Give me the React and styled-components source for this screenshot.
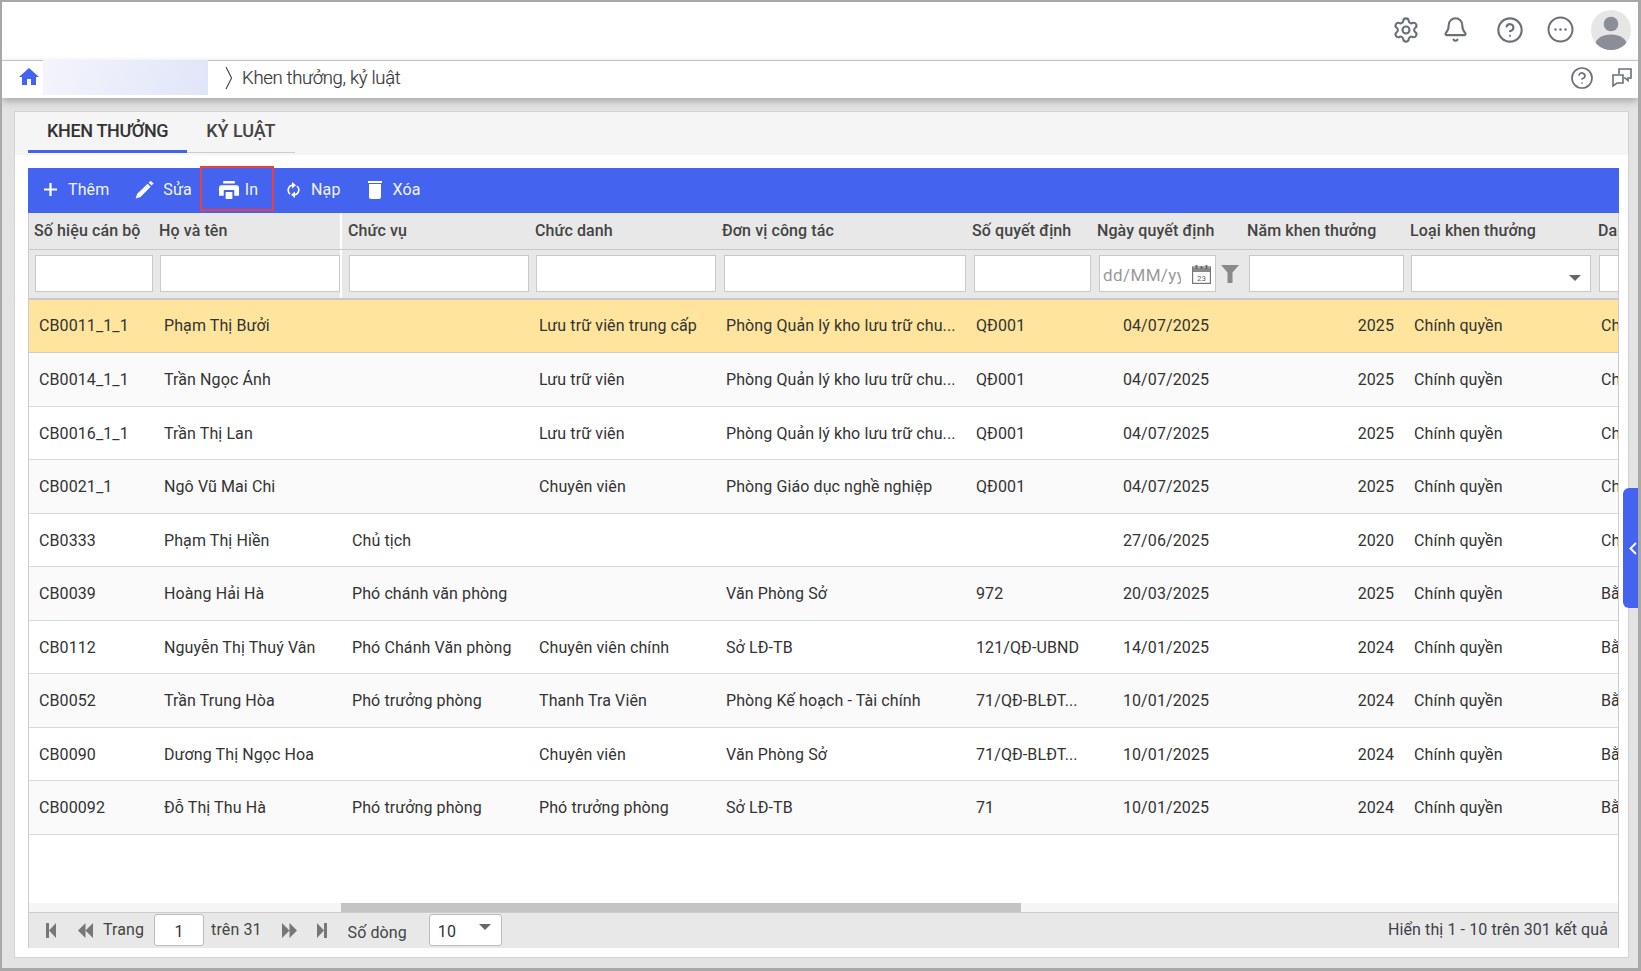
import React from "react";
import styled, { createGlobalStyle, css } from "styled-components";
import { Settings, Bell, CircleHelp } from "lucide-react";
import { MdHome } from "react-icons/md";

const Global = createGlobalStyle`
  html, body { margin: 0; padding: 0; height: 971px; overflow: hidden; }
  * { box-sizing: border-box; }
  body { font-family: Roboto, "Liberation Sans", sans-serif; color: #333; }
`;

const COLS = "124px 189px 187px 187px 250px 125px 150px 163px 188px 180px";

const Frame = styled.div`
  position: relative; width: 1641px; height: 971px; display: flex; flex-direction: column;
  background: #e3e3e3; border-style: solid; border-color: #a8a8a8; border-width: 2px 3px 3px 2px; overflow: hidden;
`;
const TopBar = styled.header`
  height: 59px; flex: none; background: #fff; border-bottom: 1px solid #ccc;
  display: flex; align-items: center; justify-content: flex-end; padding-right: 7px; padding-bottom: 3px; color: #6b6f78;
`;
const TopIcon = styled.span`
  display: flex; margin-left: ${p => p.$ml || 0}px;
`;
const Avatar = styled.span`
  width: 40px; height: 40px; border-radius: 50%; overflow: hidden; background: #e6e6e6; display: block; margin-left: ${p => p.$ml}px;
  svg { display: block; }
`;
const Crumb = styled.nav`
  position: relative; z-index: 1; height: 37px; flex: none; background: #fff; box-shadow: 0 3px 8px rgba(0,0,0,.28);
  display: flex; align-items: center; padding-left: 15px; color: #6b6f78;
`;
const HomeIcon = styled(MdHome)`
  color: #4464f0; width: 24px; height: 24px; flex: none; margin-top: -6px;
`;
const CrumbBlur = styled.div`
  width: 165px; height: 35px; margin: 0 0 4px 2px; background: linear-gradient(100deg, #f3f4fc, #e1e5f8);
`;
const CrumbSep = styled.svg`
  margin-left: 17px; flex: none; margin-bottom: 3px;
`;
const CrumbText = styled.span`
  margin-left: 9px; font-size: 18.5px; color: #3a3a3a; letter-spacing: -.3px; flex: 1; font-weight: 300;
  -webkit-text-stroke: .2px #3a3a3a; padding-bottom: 4px;
`;
const CrumbAction = styled.span`
  display: flex; margin-right: ${p => p.$mr}px; margin-bottom: 4px;
`;
const Body = styled.main`
  flex: 1; min-height: 0; padding: 13px 9px 10px 12px; display: flex;
`;
const Panel = styled.section`
  flex: 1; min-width: 0; background: #fff; border: 1px solid #d2d2d2; display: flex; flex-direction: column;
`;
const TabBar = styled.div`
  height: 43px; flex: none; background: #f5f5f5; padding-left: 13px; margin-bottom: 13px;
`;
const TabList = styled.div`
  display: inline-flex; height: 41px; border-bottom: 1px solid #ccc;
`;
const Tab = styled.div`
  height: 41px; padding: 1px 19px 2px 19px; display: flex; align-items: center;
  font-size: 18px; font-weight: 500; letter-spacing: ${p => p.$active ? -.35 : -.05}px; color: ${p => p.$active ? "#333" : "#444"};
  border-bottom: 3px solid ${p => p.$active ? "#4464f0" : "transparent"};
  margin-bottom: -1px;
`;
const Content = styled.div`
  flex: 1; min-height: 0; margin: 0 9px 9px 13px; display: flex; flex-direction: column;
`;
const Toolbar = styled.div`
  height: 45px; flex: none; background: #4464f0; display: flex; align-items: center; padding-left: 2px;
`;
const ToolButton = styled.div`
  display: flex; align-items: center; color: #f2f4fe; font-size: 16px; letter-spacing: .1px; height: 45px;
  padding: 0 ${p => p.$pr ?? 14}px 2px ${p => p.$pl ?? 14}px; gap: ${p => p.$gap ?? 11}px;
  ${p => p.$active && css`
    border: 2px solid #e8413f; padding: 2px 14px 0 17px; margin: -4px 0 0; gap: 6px;
  `}
`;
const Grid = styled.div`
  flex: 1; min-height: 0; display: flex; flex-direction: column; border-left: 1px solid #ccc; border-right: 1px solid #ccc; overflow: hidden;
`;
const HeadRow = styled.div`
  height: 37px; flex: none; display: grid; grid-template-columns: ${COLS}; background: #e8e8e8; border-bottom: 1px solid #c8c8c8; overflow: hidden;
`;
const HeadCell = styled.div`
  display: flex; align-items: center; padding-left: ${p => p.$pl ?? 6}px; padding-bottom: 1px;
  font-size: 16px; font-weight: 500; color: #444; white-space: nowrap; overflow: hidden; letter-spacing: .1px;
  ${p => p.$sep && css`border-right: 2px solid #fff;`}
`;
const FilterRow = styled.div`
  height: 49.5px; flex: none; display: grid; grid-template-columns: ${COLS}; background: #e8e8e8; border-bottom: 2px solid #c8c8c8; overflow: hidden;
`;
const FilterCell = styled.div`
  padding: 5px ${p => p.$pr ?? 0}px 0 ${p => p.$pl ?? 7}px; position: relative; display: flex; align-items: flex-start;
  ${p => p.$sep && css`border-right: 2px solid #fff;`}
`;
const FilterBox = styled.div`
  flex: ${p => p.$fixed ? "none" : 1}; width: ${p => p.$fixed ? p.$fixed + "px" : "auto"}; min-width: 0; height: 37px; background: #fff; border: 1.5px solid #c9c9c9; position: relative;
  display: flex; align-items: center;
`;
const DateInput = styled.input`
  border: 0; outline: 0; background: transparent; width: 78px; margin: 2px 0 0 3px; padding: 0; font: 17px Roboto, sans-serif; letter-spacing: .4px;
  &::placeholder { color: #999; opacity: 1; }
`;
const CalendarIcon = styled.svg`
  margin-left: 10.5px; flex: none;
`;
const FunnelIcon = styled.svg`
  flex: none; margin: 10px 0 0 5px;
`;
const SelectArrow = styled.span`
  position: absolute; right: 9px; top: 19px; width: 0; height: 0;
  border-left: 6px solid transparent; border-right: 6px solid transparent; border-top: 6px solid #666;
`;
const Rows = styled.div`
  flex: 1; min-height: 0; overflow: hidden; background: #fff;
`;
const Row = styled.div`
  height: 53.55px; display: grid; grid-template-columns: ${COLS};
  background: ${p => p.$selected ? "#fee49c" : p.$alt ? "#fafafa" : "#fff"};
  border-bottom: 1px solid ${p => p.$selected ? "#ccc" : "#d3dae9"};
`;
const Cell = styled.div`
  display: flex; align-items: center; min-width: 0; padding: 0.4px 10px 0 ${p => p.$pl ?? 10}px; font-size: 16px; color: #333; letter-spacing: .1px;
  justify-content: ${p => p.$align === "center" ? "center" : p.$align === "right" ? "flex-end" : "flex-start"};
  span { white-space: nowrap; }
  overflow: hidden;
`;
const ScrollTrack = styled.div`
  height: 9px; flex: none; background: #f5f5f5; padding-left: 312px;
`;
const ScrollThumb = styled.div`
  width: 680px; height: 100%; background: #c4c4c4;
`;
const Pager = styled.div`
  height: 36px; flex: none; background: #e8e8e8; border-top: 1px solid #ccc; display: flex; align-items: center; padding: 0 10px 1px 17px;
  font-size: 16px; color: #444; letter-spacing: .1px;
`;
const PagerIcon = styled.svg`
  flex: none; margin-left: ${p => p.$ml || 0}px;
`;
const PagerLabel = styled.span`
  margin-left: ${p => p.$ml}px; padding: ${p => p.$pt || 0}px 0 ${p => p.$pt ? 0 : 2}px; white-space: nowrap;
`;
const PagerBox = styled.div`
  margin-left: ${p => p.$ml}px; width: ${p => p.$w}px; height: 32px; flex: none; background: #fff; border: 1px solid #bbb; border-radius: 3px;
  display: flex; align-items: center; padding-top: 3px; position: relative; font-size: 16px; color: #333;
  justify-content: ${p => p.$center ? "center" : "flex-start"}; padding-left: ${p => p.$center ? 0 : 8}px;
`;
const PagerArrow = styled.span`
  position: absolute; right: 10px; top: 9px; width: 0; height: 0;
  border-left: 6px solid transparent; border-right: 6px solid transparent; border-top: 6px solid #666;
`;
const PagerSummary = styled.span`
  margin-left: auto; white-space: nowrap; color: #3f3f48; padding-bottom: 2px;
`;
const SideTab = styled.div`
  position: absolute; right: 0; top: 486px; width: 15px; height: 120px; background: #4464f0; border-radius: 6px 0 0 6px;
  display: flex; align-items: center; justify-content: center; padding-left: 5px;
`;

const HEAD = ["Số hiệu cán bộ", "Họ và tên", "Chức vụ", "Chức danh", "Đơn vị công tác", "Số quyết định", "Ngày quyết định", "Năm khen thưởng", "Loại khen thưởng", "Danh hiệu"];
const KHO = "Phòng Quản lý kho lưu trữ chu...";
const QD = "71/QĐ-BLĐT...";
const DATA = [
  ["CB0011_1_1", "Phạm Thị Bưởi", "", "Lưu trữ viên trung cấp", KHO, "QĐ001", "04/07/2025", "2025", "Chính quyền", "Chiến sĩ"],
  ["CB0014_1_1", "Trần Ngọc Ánh", "", "Lưu trữ viên", KHO, "QĐ001", "04/07/2025", "2025", "Chính quyền", "Chiến sĩ"],
  ["CB0016_1_1", "Trần Thị Lan", "", "Lưu trữ viên", KHO, "QĐ001", "04/07/2025", "2025", "Chính quyền", "Chiến sĩ"],
  ["CB0021_1", "Ngô Vũ Mai Chi", "", "Chuyên viên", "Phòng Giáo dục nghề nghiệp", "QĐ001", "04/07/2025", "2025", "Chính quyền", "Chiến sĩ"],
  ["CB0333", "Phạm Thị Hiền", "Chủ tịch", "", "", "", "27/06/2025", "2020", "Chính quyền", "Chiến sĩ"],
  ["CB0039", "Hoàng Hải Hà", "Phó chánh văn phòng", "", "Văn Phòng Sở", "972", "20/03/2025", "2025", "Chính quyền", "Bằng khen"],
  ["CB0112", "Nguyễn Thị Thuý Vân", "Phó Chánh Văn phòng", "Chuyên viên chính", "Sở LĐ-TB", "121/QĐ-UBND", "14/01/2025", "2024", "Chính quyền", "Bằng khen"],
  ["CB0052", "Trần Trung Hòa", "Phó trưởng phòng", "Thanh Tra Viên", "Phòng Kế hoạch - Tài chính", QD, "10/01/2025", "2024", "Chính quyền", "Bằng khen"],
  ["CB0090", "Dương Thị Ngọc Hoa", "", "Chuyên viên", "Văn Phòng Sở", QD, "10/01/2025", "2024", "Chính quyền", "Bằng khen"],
  ["CB00092", "Đỗ Thị Thu Hà", "Phó trưởng phòng", "Phó trưởng phòng", "Sở LĐ-TB", "71", "10/01/2025", "2024", "Chính quyền", "Bằng khen"],
];

const PlusIcon = () => (
  <svg width="13" height="13" viewBox="0 0 13 13"><path d="M5.4 0h2.2v5.4H13v2.2H7.6V13H5.4V7.6H0V5.4h5.4z" fill="#fff" /></svg>
);
const PencilIcon = () => (
  <svg width="19" height="19" viewBox="0 0 18 18"><path d="M14.8.6l2.8 2.8-1.9 1.9-2.8-2.8zM11.9 3.5l2.9 2.9-9.6 9.7-4.7 1.5 1.6-4.6z" fill="#fff" /></svg>
);
const PrintIcon = () => (
  <svg width="20" height="18" viewBox="0 0 19 17"><path d="M4 0h11v2.4H4zM2.3 4h14.4A2.3 2.3 0 0 1 19 6.3V14h-4.5V8.5h-10V14H0V6.3A2.3 2.3 0 0 1 2.3 4zM6.3 10.3h6.4V17H6.3z" fill="#fff" /></svg>
);
const ReloadIcon = () => (
  <svg width="13" height="18" viewBox="0 0 13 18" fill="none"><path d="M5 4.3A5 5 0 0 0 3 13M8 13.7A5 5 0 0 0 10 5" stroke="#fff" strokeWidth="1.6" /><path d="M5 1v6.4L9 4.2zM8 17v-6.4L4 13.8z" fill="#fff" /></svg>
);
const TrashIcon = () => (
  <svg width="14" height="18" viewBox="0 0 14 18"><path d="M0 0h14v2H0zM1 3h12v13a2 2 0 0 1-2 2H3a2 2 0 0 1-2-2z" fill="#fff" /></svg>
);
const First = ({ ml }) => <PagerIcon $ml={ml} width="10" height="15" viewBox="0 0 10 15"><path d="M0 0h3v15H0zM10 0v15L3 7.5z" fill="#777" /></PagerIcon>;
const Prev = ({ ml }) => <PagerIcon $ml={ml} width="15" height="15" viewBox="0 0 15 15"><path d="M7.5 0v15L0 7.5zM15 0v15L7.5 7.5z" fill="#777" /></PagerIcon>;
const Next = ({ ml }) => <PagerIcon $ml={ml} width="15" height="15" viewBox="0 0 15 15"><path d="M0 0v15l7.5-7.5zM7.5 0v15L15 7.5z" fill="#777" /></PagerIcon>;
const Last = ({ ml }) => <PagerIcon $ml={ml} width="10" height="15" viewBox="0 0 10 15"><path d="M0 0v15l7-7.5zM7 0h3v15H7z" fill="#777" /></PagerIcon>;

export default function App() {
  return (
    <Frame>
      <Global />
      <TopBar>
        <TopIcon><Settings size={28} strokeWidth={1.8} /></TopIcon>
        <TopIcon $ml={22}><Bell size={27} strokeWidth={1.8} /></TopIcon>
        <TopIcon $ml={27}><CircleHelp size={28} strokeWidth={1.8} /></TopIcon>
        <TopIcon $ml={23}>
          <svg width="27" height="27" viewBox="0 0 27 27" fill="none">
            <circle cx="13.5" cy="13.5" r="12" stroke="currentColor" strokeWidth="2" />
            <circle cx="8.5" cy="13.5" r="1.2" fill="currentColor" /><circle cx="13.5" cy="13.5" r="1.2" fill="currentColor" /><circle cx="18.5" cy="13.5" r="1.2" fill="currentColor" />
          </svg>
        </TopIcon>
        <Avatar $ml={17}>
          <svg width="40" height="40" viewBox="0 0 40 40"><circle cx="20" cy="14" r="7.3" fill="#8b8e97" /><path d="M3 40c0-11 7-15.5 17-15.5S37 29 37 40z" fill="#8b8e97" /></svg>
        </Avatar>
      </TopBar>
      <Crumb>
        <HomeIcon />
        <CrumbBlur />
        <CrumbSep width="8" height="24" viewBox="0 0 8 24" fill="none"><path d="M1 1l5.6 11L1 23" stroke="#444" strokeWidth="1.1" /></CrumbSep>
        <CrumbText>Khen thưởng, kỷ luật</CrumbText>
        <CrumbAction $mr={18}><CircleHelp size={24} strokeWidth={1.7} /></CrumbAction>
        <CrumbAction $mr={6}>
          <svg width="20" height="20" viewBox="0 0 20 20" fill="none" stroke="currentColor" strokeWidth="1.6"><path d="M7 6V1h12v9h-3v2.5L13 10h-1" /><path d="M1 7h10v8H5l-4 3z" /></svg>
        </CrumbAction>
      </Crumb>
      <Body>
        <Panel>
          <TabBar>
            <TabList>
              <Tab $active>KHEN THƯỞNG</Tab>
              <Tab>KỶ LUẬT</Tab>
            </TabList>
          </TabBar>
          <Content>
            <Toolbar>
              <ToolButton $pr={12}><PlusIcon />Thêm</ToolButton>
              <ToolButton $pr={8} $gap={9}><PencilIcon />Sửa</ToolButton>
              <ToolButton $active><PrintIcon />In</ToolButton>
              <ToolButton $pl={13}><ReloadIcon />Nạp</ToolButton>
              <ToolButton $gap={10}><TrashIcon />Xóa</ToolButton>
            </Toolbar>
            <Grid>
              <HeadRow>
                {HEAD.map((h, i) => <HeadCell key={h} $sep={i === 1} $pl={i === 0 ? 5 : 6}>{h}</HeadCell>)}
              </HeadRow>
              <FilterRow>
                <FilterCell $pl={6}><FilterBox /></FilterCell>
                <FilterCell $sep><FilterBox /></FilterCell>
                <FilterCell><FilterBox /></FilterCell>
                <FilterCell><FilterBox /></FilterCell>
                <FilterCell $pl={8}><FilterBox /></FilterCell>
                <FilterCell $pl={8}><FilterBox /></FilterCell>
                <FilterCell $pl={8}>
                  <FilterBox $fixed={117}>
                    <DateInput placeholder="dd/MM/yyyy" readOnly />
                    <CalendarIcon width="19" height="20" viewBox="0 0 19 20" fill="none">
                      <rect x=".6" y="3" width="17.8" height="16.4" stroke="#777" strokeWidth="1.2" />
                      <path d="M1 4h17v4H1z" fill="#8a8a8a" />
                      <path d="M4.5 1v4M9.5 2v3M14.5 1v4" stroke="#666" strokeWidth="1.8" />
                      <text x="9.5" y="16.6" textAnchor="middle" fontSize="8" fontFamily="Roboto" fill="#666">23</text>
                    </CalendarIcon>
                  </FilterBox>
                  <FunnelIcon width="18" height="18" viewBox="0 0 18 18"><path d="M0 0h18l-6.5 7.5V18h-5V7.5z" fill="#8a8a8a" /></FunnelIcon>
                </FilterCell>
                <FilterCell $pl={8}><FilterBox /></FilterCell>
                <FilterCell $pr={1}><FilterBox><SelectArrow /></FilterBox></FilterCell>
                <FilterCell><FilterBox /></FilterCell>
              </FilterRow>
              <Rows>
                {DATA.map((r, ri) => (
                  <Row key={r[0]} $selected={ri === 0} $alt={ri % 2 === 1}>
                    {r.map((c, ci) => (
                      <Cell key={ci} $pl={ci === 9 ? 9 : ci === 1 ? 11 : 10} $align={ci === 6 ? "center" : ci === 7 ? "right" : undefined}>
                        <span>{c}</span>
                      </Cell>
                    ))}
                  </Row>
                ))}
              </Rows>
              <ScrollTrack><ScrollThumb /></ScrollTrack>
              <Pager>
                <First />
                <Prev ml={22} />
                <PagerLabel $ml={10}>Trang</PagerLabel>
                <PagerBox $ml={10} $w={50} $center>1</PagerBox>
                <PagerLabel $ml={7}>trên 31</PagerLabel>
                <Next ml={20} />
                <Last ml={20} />
                <PagerLabel $ml={21} $pt={4}>Số dòng</PagerLabel>
                <PagerBox $ml={22} $w={73}>10<PagerArrow /></PagerBox>
                <PagerSummary>Hiển thị 1 - 10 trên 301 kết quả</PagerSummary>
              </Pager>
            </Grid>
          </Content>
        </Panel>
      </Body>
      <SideTab>
        <svg width="8" height="13" viewBox="0 0 8 13" fill="none"><path d="M7 1L1.5 6.5 7 12" stroke="#fff" strokeWidth="2" /></svg>
      </SideTab>
    </Frame>
  );
}
